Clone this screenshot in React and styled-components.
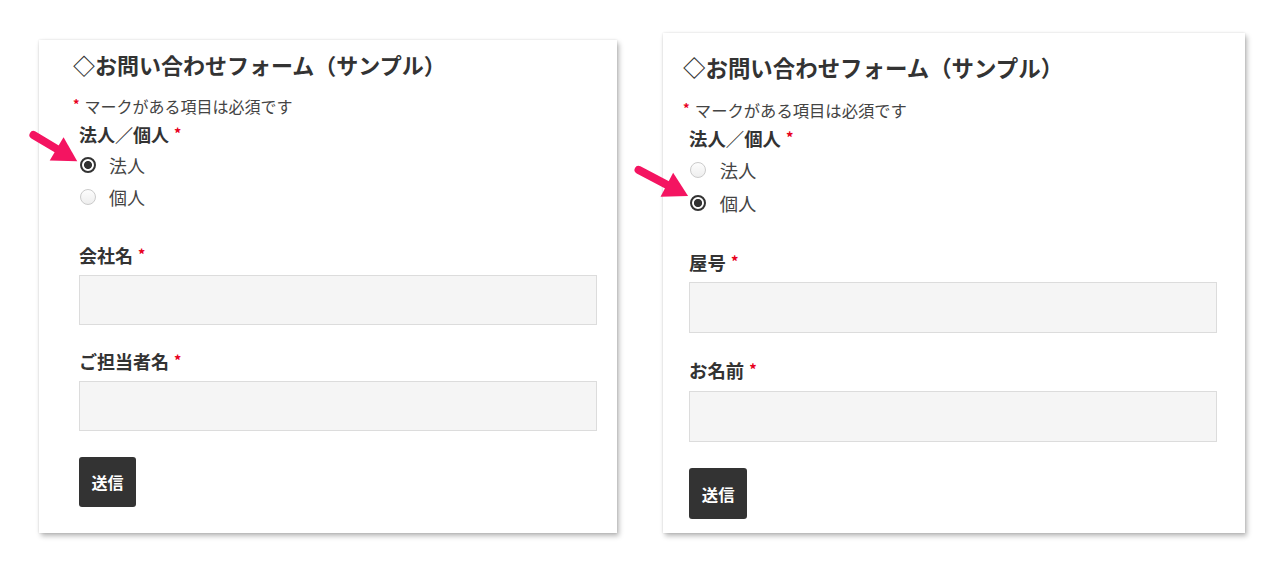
import React from "react";
import styled, { createGlobalStyle } from "styled-components";

const u = (n) => `calc(${n}px * var(--s))`;

const GlobalStyle = createGlobalStyle`
  html, body { margin: 0; padding: 0; background: #fff; }
  body {
    font-family: "Noto Sans CJK JP", "Noto Sans", sans-serif;
    color: #333;
  }
`;

const Page = styled.main`
  position: relative;
  display: flex;
  align-items: flex-end;
  gap: 46px;
  padding: 0 0 38px 39px;
  height: 571px;
  box-sizing: border-box;
  overflow: hidden;
`;

const Card = styled.section`
  --s: ${(p) => p.$scale};
  box-sizing: border-box;
  width: ${(p) => p.$width}px;
  padding: ${(p) => p.$pad};
  display: flex;
  flex-direction: column;
  background: #fff;
  box-shadow: 0 0 2px rgba(0, 0, 0, 0.12), 2px 3px 5px rgba(0, 0, 0, 0.28);
`;

const Title = styled.h2`
  margin: 0;
  font-size: ${u(22)};
  line-height: ${u(30)};
  font-weight: 700;
  color: #333;
  white-space: nowrap;
`;

const Note = styled.p`
  margin: ${u(16)} 0 ${u(5)};
  font-size: ${u(16)};
  line-height: ${u(22)};
  color: #444;
`;

const Req = styled.span`
  color: #e8001c;
  font-size: 0.8em;
  font-weight: 700;
  line-height: 1;
  vertical-align: ${(p) => (p.$note ? "0.3em" : "0.2em")};
  margin-right: ${(p) => (p.$note ? "0.4em" : "0")};
  margin-left: ${(p) => (p.$note ? "0" : "0.35em")};
`;

const Fields = styled.div`
  display: flex;
  flex-direction: column;
  align-items: stretch;
  gap: ${u(24)};
  padding-left: ${u(6)};
`;

const RadioGroup = styled.div`
  display: flex;
  flex-direction: column;
  gap: ${u(3)};
  padding-bottom: ${u(6)};
`;

const Field = styled.div`
  display: flex;
  flex-direction: column;
  gap: ${u(8)};
`;

const Label = styled.div`
  font-size: ${u(18)};
  line-height: ${u(24)};
  font-weight: 700;
  color: #333;
`;

const Options = styled.div`
  display: flex;
  flex-direction: column;
`;

const RadioRow = styled.label`
  display: flex;
  align-items: center;
  gap: ${u(13)};
  height: ${u(32)};
  padding-left: ${u(1)};
  font-size: ${u(18)};
  color: #444;
`;

const Radio = styled.input.attrs({ type: "radio" })`
  appearance: none;
  -webkit-appearance: none;
  box-sizing: border-box;
  margin: 0;
  width: ${u(16)};
  height: ${u(16)};
  border-radius: 50%;
  border: 1px solid #cbcbcb;
  background: linear-gradient(#fdfdfd, #eeeeee);
  &:checked {
    border: ${u(2)} solid #333;
    background: radial-gradient(circle, #333 0 ${u(3.6)}, #fff ${u(4.4)});
  }
`;

const TextField = styled.input`
  display: block;
  box-sizing: border-box;
  width: 100%;
  height: ${u(50)};
  margin: 0;
  background: #f5f5f5;
  border: 1px solid #dcdcdc;
  border-radius: 0;
  outline: none;
`;

const Submit = styled.button`
  align-self: flex-start;
  margin-top: ${u(2)};
  width: ${u(57)};
  height: ${u(50)};
  padding: 0;
  background: #333;
  color: #fff;
  border: none;
  border-radius: ${u(3)};
  font-family: inherit;
  font-size: ${u(16)};
  font-weight: 700;
`;

const ArrowSvg = styled.svg`
  position: absolute;
  left: ${(p) => p.$x}px;
  top: ${(p) => p.$y}px;
  overflow: visible;
  pointer-events: none;
`;

function Arrow({ x, y, tx, ty, angle, length }) {
  const L = length;
  return (
    <ArrowSvg $x={x} $y={y} width="70" height="50">
      <g transform={`translate(${tx} ${ty}) rotate(${angle})`} fill="#f41461">
        <rect x="0" y="-4" width={L - 16} height="8" rx="4" />
        <polygon points={`${L - 24},-13.5 ${L},0 ${L - 24},13.5`} />
      </g>
    </ArrowSvg>
  );
}

function Form({ card, nameLabel, personLabel, checked }) {
  return (
    <Card {...card}>
      <Title>◇お問い合わせフォーム（サンプル）</Title>
      <Note>
        <Req $note>*</Req>マークがある項目は必須です
      </Note>
      <Fields>
        <RadioGroup>
          <Label>
            法人／個人<Req>*</Req>
          </Label>
          <Options>
            <RadioRow>
              <Radio name={checked} defaultChecked={checked === "corp"} />
              法人
            </RadioRow>
            <RadioRow>
              <Radio name={checked} defaultChecked={checked === "person"} />
              個人
            </RadioRow>
          </Options>
        </RadioGroup>
        <Field>
          <Label>
            {nameLabel}
            <Req>*</Req>
          </Label>
          <TextField type="text" />
        </Field>
        <Field>
          <Label>
            {personLabel}
            <Req>*</Req>
          </Label>
          <TextField type="text" />
        </Field>
        <Submit type="button">送信</Submit>
      </Fields>
    </Card>
  );
}

export default function App() {
  return (
    <>
      <GlobalStyle />
      <Page>
        <Form
          card={{ $scale: 1, $width: 578, $pad: "9px 20px 26px 34px" }}
          nameLabel="会社名"
          personLabel="ご担当者名"
          checked="corp"
        />
        <Form
          card={{ $scale: 1.02, $width: 582, $pad: "19px 28px 14px 20px" }}
          nameLabel="屋号"
          personLabel="お名前"
          checked="person"
        />
        <Arrow x={24} y={122} tx={6} ty={11} angle={30.8} length={55} />
        <Arrow x={628} y={157} tx={7} ty={11} angle={27.8} length={60} />
      </Page>
    </>
  );
}
